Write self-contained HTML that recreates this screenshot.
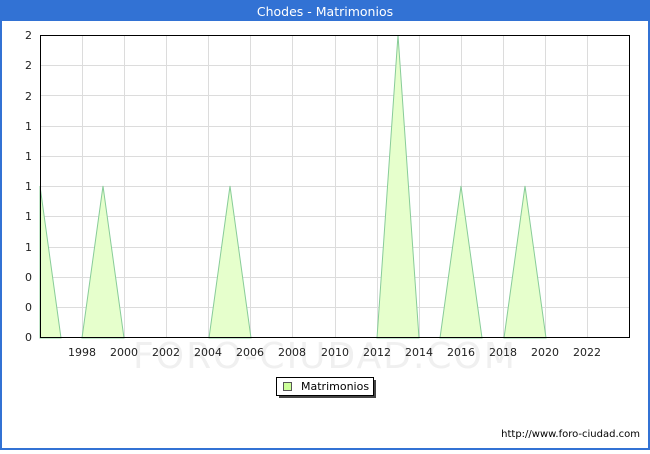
<!DOCTYPE html>
<html><head><style>
body{margin:0;width:650px;height:450px;overflow:hidden;font-family:"DejaVu Sans","Liberation Sans",sans-serif;background:#fff}
</style></head><body>
<svg width="650" height="450" xmlns="http://www.w3.org/2000/svg" font-family="DejaVu Sans, sans-serif">
<rect x="0" y="0" width="650" height="450" fill="#3272d4"/>
<rect x="2" y="21" width="646" height="427" fill="#fff"/>
<text x="325" y="16" fill="#fff" font-size="12.5" text-anchor="middle">Chodes - Matrimonios</text>
<text x="325" y="368" fill="#f0f0f0" font-size="36" text-anchor="middle" letter-spacing="2">FORO-CIUDAD.COM</text>
<g stroke="#dcdcdc" stroke-width="1">
<line x1="40" y1="65.5" x2="630" y2="65.5"/><line x1="40" y1="95.5" x2="630" y2="95.5"/><line x1="40" y1="126.5" x2="630" y2="126.5"/><line x1="40" y1="156.5" x2="630" y2="156.5"/><line x1="40" y1="186.5" x2="630" y2="186.5"/><line x1="40" y1="216.5" x2="630" y2="216.5"/><line x1="40" y1="247.5" x2="630" y2="247.5"/><line x1="40" y1="277.5" x2="630" y2="277.5"/><line x1="40" y1="307.5" x2="630" y2="307.5"/>
<line x1="82.5" y1="35" x2="82.5" y2="338"/><line x1="124.5" y1="35" x2="124.5" y2="338"/><line x1="166.5" y1="35" x2="166.5" y2="338"/><line x1="208.5" y1="35" x2="208.5" y2="338"/><line x1="250.5" y1="35" x2="250.5" y2="338"/><line x1="292.5" y1="35" x2="292.5" y2="338"/><line x1="335.5" y1="35" x2="335.5" y2="338"/><line x1="377.5" y1="35" x2="377.5" y2="338"/><line x1="419.5" y1="35" x2="419.5" y2="338"/><line x1="461.5" y1="35" x2="461.5" y2="338"/><line x1="503.5" y1="35" x2="503.5" y2="338"/><line x1="545.5" y1="35" x2="545.5" y2="338"/><line x1="587.5" y1="35" x2="587.5" y2="338"/>
</g>
<g fill="#e6ffcc" stroke="#88cc99" stroke-width="1">
<polygon points="40,186 61,338 40,338"/>
<polygon points="82,338 103,186 124,338"/>
<polygon points="209,338 230,186 251,338"/>
<polygon points="377,338 398,35 419,338"/>
<polygon points="440,338 461,186 482,338"/>
<polygon points="504,338 525,186 546,338"/>
</g>
<rect x="40.5" y="35.5" width="589" height="302" fill="none" stroke="#000" stroke-width="1"/>
<g font-size="11" fill="#222" text-anchor="end">
<text x="32" y="39">2</text><text x="32" y="69">2</text><text x="32" y="100">2</text><text x="32" y="130">1</text><text x="32" y="160">1</text><text x="32" y="190">1</text><text x="32" y="220">1</text><text x="32" y="251">1</text><text x="32" y="281">0</text><text x="32" y="311">0</text><text x="32" y="341">0</text>
</g>
<g font-size="11" fill="#222" text-anchor="middle">
<text x="82" y="356">1998</text><text x="124" y="356">2000</text><text x="166" y="356">2002</text><text x="208" y="356">2004</text><text x="250" y="356">2006</text><text x="292" y="356">2008</text><text x="335" y="356">2010</text><text x="377" y="356">2012</text><text x="419" y="356">2014</text><text x="461" y="356">2016</text><text x="503" y="356">2018</text><text x="545" y="356">2020</text><text x="587" y="356">2022</text>
</g>
<rect x="279" y="380" width="97" height="18" fill="#444"/>
<rect x="276.5" y="377.5" width="97" height="18" fill="#fff" stroke="#000"/>
<rect x="283.5" y="382.5" width="8" height="8" fill="#ccff99" stroke="#555"/>
<text x="301" y="390" font-size="11" fill="#000">Matrimonios</text>
<text x="640" y="437" font-size="10" fill="#000" text-anchor="end">http://www.foro-ciudad.com</text>
</svg>
</body></html>
